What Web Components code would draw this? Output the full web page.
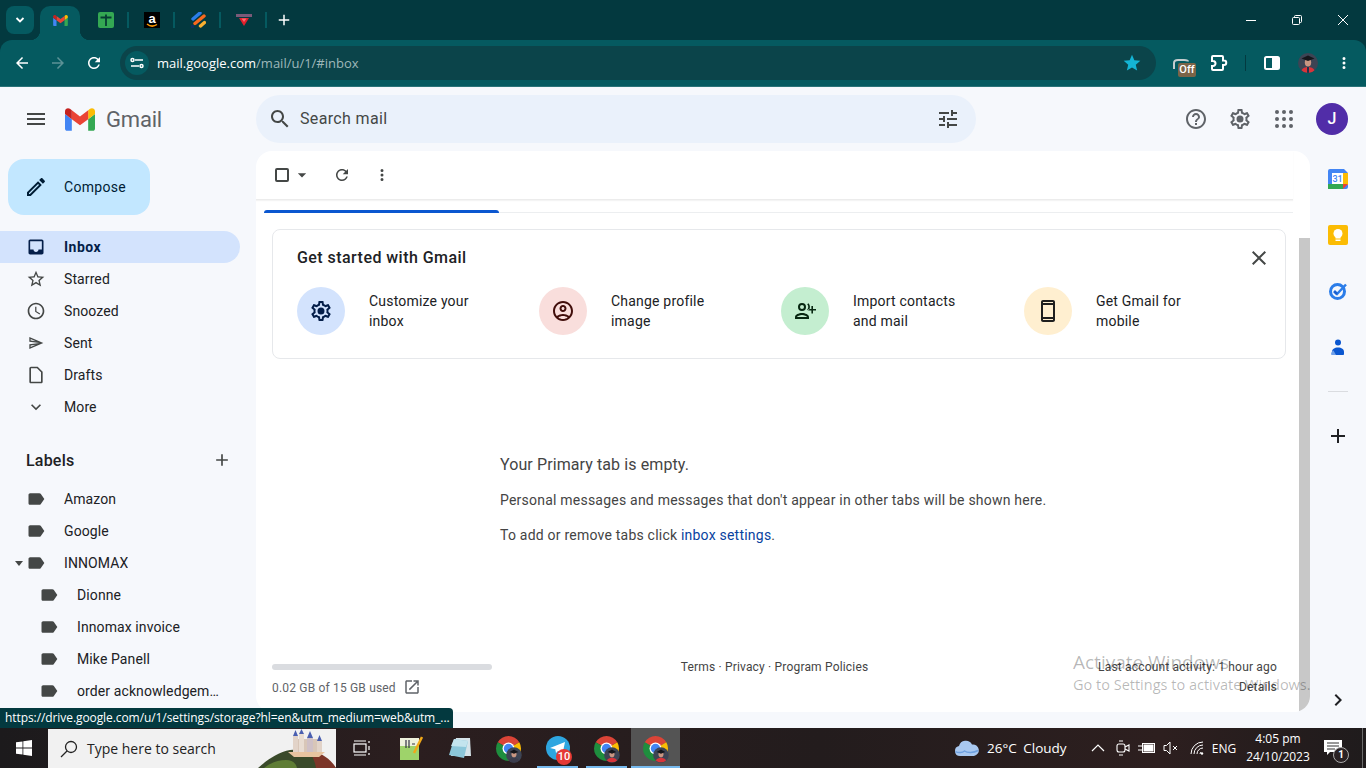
<!DOCTYPE html>
<html lang="en">
<head>
<meta charset="utf-8">
<title>Inbox - Gmail</title>
<style>
  html, body { margin: 0; height: 768px; overflow: hidden; }
  body {
    position: relative;
    display: flex;
    flex-direction: column;
    font-family: Roboto, "Liberation Sans", sans-serif;
    background: #f6f8fc;
  }
</style>
</head>
<body>
<chrome-tabs></chrome-tabs>
<chrome-toolbar></chrome-toolbar>
<gmail-app></gmail-app>
<win-taskbar></win-taskbar>
<status-bubble>https://drive.google.com/u/1/settings/storage?hl=en&amp;utm_medium=web&amp;utm_...</status-bubble>
<activate-mark></activate-mark>

<script>
const PATHS = {
  menu: 'M3 18h18v-2H3v2zm0-5h18v-2H3v2zm0-7v2h18V6H3z',
  search: 'M15.5 14h-.79l-.28-.27C15.41 12.59 16 11.11 16 9.5 16 5.91 13.09 3 9.5 3S3 5.91 3 9.5 5.91 16 9.5 16c1.61 0 3.09-.59 4.23-1.57l.27.28v.79l5 4.99L20.49 19l-4.99-5zm-6 0C7.01 14 5 11.99 5 9.5S7.01 5 9.5 5 14 7.01 14 9.5 11.99 14 9.5 14z',
  tune: 'M3 17v2h6v-2H3zM3 5v2h10V5H3zm10 16v-2h8v-2h-8v-2h-2v6h2zM7 9v2H3v2h4v2h2V9H7zm14 4v-2H11v2h10zm-6-4h2V7h4V5h-4V3h-2v6z',
  help: 'M11 18h2v-2h-2v2zm1-16C6.48 2 2 6.48 2 12s4.48 10 10 10 10-4.48 10-10S17.52 2 12 2zm0 18c-4.41 0-8-3.59-8-8s3.59-8 8-8 8 3.59 8 8-3.59 8-8 8zm0-14c-2.21 0-4 1.79-4 4h2c0-1.1.9-2 2-2s2 .9 2 2c0 2-3 1.75-3 5h2c0-2.25 3-2.5 3-5 0-2.21-1.79-4-4-4z',
  gear: 'M19.43 12.98c.04-.32.07-.64.07-.98 0-.34-.03-.66-.07-.98l2.11-1.65c.19-.15.24-.42.12-.64l-2-3.46c-.09-.16-.26-.25-.44-.25-.06 0-.12.01-.17.03l-2.49 1c-.52-.4-1.08-.73-1.69-.98l-.38-2.65C14.46 2.18 14.25 2 14 2h-4c-.25 0-.46.18-.49.42l-.38 2.65c-.61.25-1.17.59-1.69.98l-2.49-1c-.06-.02-.12-.03-.18-.03-.17 0-.34.09-.43.25l-2 3.46c-.13.22-.07.49.12.64l2.11 1.65c-.04.32-.07.65-.07.98 0 .33.03.66.07.98l-2.11 1.65c-.19.15-.24.42-.12.64l2 3.46c.09.16.26.25.44.25.06 0 .12-.01.17-.03l2.49-1c.52.4 1.08.73 1.69.98l.38 2.65c.03.24.24.42.49.42h4c.25 0 .46-.18.49-.42l.38-2.65c.61-.25 1.17-.59 1.69-.98l2.49 1c.06.02.12.03.18.03.17 0 .34-.09.43-.25l2-3.46c.12-.22.07-.49-.12-.64l-2.11-1.65zm-1.98-1.71c.04.31.05.52.05.73 0 .21-.02.43-.05.73l-.14 1.13.89.7 1.08.84-.7 1.21-1.27-.51-1.04-.42-.9.68c-.43.32-.84.56-1.25.73l-1.06.43-.16 1.13-.2 1.35h-1.4l-.19-1.35-.16-1.13-1.06-.43c-.43-.18-.83-.41-1.23-.71l-.91-.7-1.06.43-1.27.51-.7-1.21 1.08-.84.89-.7-.14-1.13c-.03-.31-.05-.54-.05-.74s.02-.43.05-.73l.14-1.13-.89-.7-1.08-.84.7-1.21 1.27.51 1.04.42.9-.68c.43-.32.84-.56 1.25-.73l1.06-.43.16-1.13.2-1.35h1.39l.19 1.35.16 1.13 1.06.43c.43.18.83.41 1.23.71l.91.7 1.06-.43 1.27-.51.7 1.21-1.07.85-.89.7.14 1.13zM12 8.5a3.5 3.5 0 1 0 0 7 3.5 3.5 0 0 0 0-7z',
  edit: 'M14.06 9.02l.92.92L5.92 19H5v-.92l9.06-9.06M17.66 3c-.25 0-.51.1-.7.29l-1.83 1.83 3.75 3.75 1.83-1.83c.39-.39.39-1.02 0-1.41l-2.34-2.34c-.2-.2-.45-.29-.71-.29zm-3.6 3.19L3 17.25V21h3.75L17.81 9.94l-3.75-3.75z',
  inbox: 'M19 3H4.99c-1.11 0-1.98.89-1.98 2L3 19c0 1.1.88 2 1.99 2H19c1.1 0 2-.9 2-2V5c0-1.11-.9-2-2-2zm0 12h-4c0 1.66-1.35 3-3 3s-3-1.34-3-3H4.99V5H19v10z',
  star: 'M22 9.24l-7.19-.62L12 2 9.19 8.63 2 9.24l5.46 4.73L5.82 21 12 17.27 18.18 21l-1.63-7.03L22 9.24zM12 15.4l-3.76 2.27 1-4.28-3.32-2.88 4.38-.38L12 6.1l1.71 4.04 4.38.38-3.32 2.88 1 4.28L12 15.4z',
  starfill: 'M12 17.27L18.18 21l-1.64-7.03L22 9.24l-7.19-.61L12 2 9.19 8.63 2 9.24l5.46 4.73L5.82 21z',
  clock: 'M11.99 2C6.47 2 2 6.48 2 12s4.47 10 9.99 10C17.52 22 22 17.52 22 12S17.52 2 11.99 2zM12 20c-4.42 0-8-3.58-8-8s3.58-8 8-8 8 3.58 8 8-3.58 8-8 8zm.5-13H11v6l5.25 3.15.75-1.23-4.5-2.67z',
  send: 'M4.01 6.03l7.51 3.22-7.52-1 .01-2.22m7.5 8.72L4 17.97v-2.22l7.51-1M2.01 3L2 10l15 2-15 2 .01 7L23 12 2.01 3z',
  draft: 'M6 2c-1.1 0-2 .9-2 2v16c0 1.1.9 2 2 2h12c1.1 0 2-.9 2-2V8l-6-6H6zm0 18V4h7.17L18 8.83V20H6z',
  more: 'M16.59 8.59L12 13.17 7.41 8.59 6 10l6 6 6-6z',
  label: 'M17.63 5.84C17.27 5.33 16.67 5 16 5L5 5.01C3.9 5.01 3 5.9 3 7v10c0 1.1.9 1.99 2 1.99L16 19c.67 0 1.27-.33 1.63-.84L22 12l-4.37-6.16z',
  add: 'M19 13h-6v6h-2v-6H5v-2h6V5h2v6h6v2z',
  drop: 'M7 10l5 5 5-5z',
  refresh: 'M17.65 6.35C16.2 4.9 14.21 4 12 4c-4.42 0-7.99 3.58-7.99 8s3.57 8 7.99 8c3.73 0 6.84-2.55 7.73-6h-2.08c-.82 2.33-3.04 4-5.65 4-3.31 0-6-2.69-6-6s2.69-6 6-6c1.66 0 3.14.69 4.22 1.78L13 11h7V4l-2.35 2.35z',
  dots: 'M12 8a2 2 0 1 0 0-4 2 2 0 0 0 0 4zm0 2a2 2 0 1 0 0 4 2 2 0 0 0 0-4zm0 6a2 2 0 1 0 0 4 2 2 0 0 0 0-4z',
  close: 'M19 6.41L17.59 5 12 10.59 6.41 5 5 6.41 10.59 12 5 17.59 6.41 19 12 13.41 17.59 19 19 17.59 13.41 12z',
  account: 'M12 2C6.48 2 2 6.48 2 12s4.48 10 10 10 10-4.48 10-10S17.52 2 12 2zM7.35 18.5C8.66 17.56 10.26 17 12 17s3.34.56 4.65 1.5C15.34 19.44 13.74 20 12 20s-3.34-.56-4.65-1.5zm10.79-1.38C16.45 15.8 14.32 15 12 15s-4.45.8-6.14 2.12C4.7 15.73 4 13.95 4 12c0-4.42 3.58-8 8-8s8 3.58 8 8c0 1.95-.7 3.73-1.86 5.12zM12 6c-1.93 0-3.5 1.57-3.5 3.5S10.07 13 12 13s3.5-1.57 3.5-3.5S13.93 6 12 6zm0 5c-.83 0-1.5-.67-1.5-1.5S11.17 8 12 8s1.5.67 1.5 1.5S12.83 11 12 11z',
  phone: 'M17 1.01L7 1c-1.1 0-2 .9-2 2v18c0 1.1.9 2 2 2h10c1.1 0 2-.9 2-2V3c0-1.1-.9-1.99-2-1.99zM17 21H7v-1h10v1zm0-3H7V6h10v12zM7 4V3h10v1H7z',
  contacts: 'M9 4a4 4 0 1 0 0 8 4 4 0 0 0 0-8zm0 6a2 2 0 1 1 0-4 2 2 0 0 1 0 4zm0 4c-3.3 0-7 1.6-7 4v2h14v-2c0-2.4-3.7-4-7-4zm-5 4c.3-.8 2.7-2 5-2s4.7 1.2 5 2H4zm11.5-13.7a6 6 0 0 1 0 7.4l-1.3-1a4.3 4.3 0 0 0 0-5.4l1.3-1zM20 10V7h-1.6v3h-3v1.6h3v3H20v-3h3V10h-3z',
  link: 'M19 19H5V5h7V3H5c-1.11 0-2 .9-2 2v14c0 1.1.89 2 2 2h14c1.1 0 2-.9 2-2v-7h-2v7zM14 3v2h3.59l-9.83 9.83 1.41 1.41L19 6.41V10h2V3h-7z',
  right: 'M10 6L8.59 7.41 13.17 12l-4.58 4.59L10 18l6-6z',
  back: 'M20 11H7.83l5.59-5.59L12 4l-8 8 8 8 1.41-1.41L7.83 13H20v-2z',
  forward: 'M4 13h12.17l-5.59 5.59L12 20l8-8-8-8-1.41 1.41L16.17 11H4v2z'
};

// tiny base so every element only has to say what css + markup it wants
class Comp extends HTMLElement {
  connectedCallback() {
    if (this.shadowRoot) return;
    this.attachShadow({ mode: 'open' }).innerHTML = `<style>${this.css()}</style>${this.html()}`;
  }
  css() { return ':host{display:block}'; }
  html() { return '<slot></slot>'; }
}

class GIcon extends Comp {
  css() {
    const s = this.getAttribute('size') || 20;
    return `:host{display:inline-flex;flex:none;width:${s}px;height:${s}px}svg{display:block;width:100%;height:100%;fill:currentColor}`;
  }
  html() { return `<svg viewBox="0 0 24 24"><path d="${PATHS[this.getAttribute('name')]}"/></svg>`; }
}
customElements.define('g-icon', GIcon);

const gmailM = (w, h) => `<svg width="${w}" height="${h}" viewBox="52 42 88 66">
  <path fill="#4285f4" d="M58 108h14V74L52 59v43c0 3.32 2.69 6 6 6"/>
  <path fill="#34a853" d="M120 108h14c3.32 0 6-2.69 6-6V59l-20 15"/>
  <path fill="#fbbc04" d="M120 48v26l20-15v-8c0-7.42-8.47-11.65-14.4-7.2"/>
  <path fill="#ea4335" d="M72 74V48l24 18 24-18v26L96 92"/>
  <path fill="#c5221f" d="M52 51v8l20 15V48l-5.6-4.2c-5.94-4.45-14.4-.22-14.4 7.2"/></svg>`;

const gradFace = (s) => `<svg width="${s}" height="${s}" viewBox="0 0 20 20">
  <defs><clipPath id="c"><circle cx="10" cy="10" r="10"/></clipPath></defs>
  <g clip-path="url(#c)"><rect width="20" height="20" fill="#3d4454"/>
  <path d="M3 20c0-4 3-6 7-6s7 2 7 6z" fill="#d8343a"/><path d="M9 14h2v6H9z" fill="#26304a"/>
  <ellipse cx="10" cy="9.5" rx="3.2" ry="4" fill="#c99682"/>
  <path d="M3.500 5.5L10 2.500l6.500 3L10 8z" fill="#15161b"/></g></svg>`;

class ChromeTabs extends Comp {
  css() {
    return `
    :host { display:flex; flex:none; height:40px; background:#03393f; color:#fff; align-items:stretch; }
    .list { width:28px; height:28px; margin:6px 6px 0 6px; border-radius:8px; background:#055a60; display:flex; align-items:center; justify-content:center; }
    .active { position:relative; width:40px; margin-top:6px; margin-right:3px; background:#055a60; border-radius:10px 10px 0 0; display:flex; align-items:center; justify-content:center; padding-bottom:6px; box-sizing:border-box; }
    .active::before, .active::after { content:""; position:absolute; bottom:0; width:10px; height:10px; }
    .active::before { left:-10px; background:radial-gradient(circle at 0 0, transparent 10px, #055a60 10.5px); }
    .active::after { right:-10px; background:radial-gradient(circle at 100% 0, transparent 10px, #055a60 10.5px); }
    .tab { position:relative; width:46px; display:flex; align-items:center; justify-content:center; }
    .tab::after { content:""; position:absolute; right:0; top:12px; height:16px; width:2px; background:#055a60; }
    .plus { width:34px; display:flex; align-items:center; justify-content:center; }
    .win { margin-left:auto; display:flex; }
    .win div { width:46px; display:flex; align-items:center; justify-content:center; }
    .az { width:16px; height:16px; background:#000; position:relative; text-align:center; font:700 13px/13px "Liberation Sans", sans-serif; color:#fff; }
    `;
  }
  html() {
    return `
    <div class="list"><svg width="10" height="8" viewBox="0 0 10 8"><path d="M1.500 2L5 5.500 8.500 2" fill="none" stroke="#fff" stroke-width="1.800"/></svg></div>
    <div class="active">${gmailM(15, 11)}</div>
    <div class="tab"><svg width="16" height="16" viewBox="0 0 16 16"><rect width="16" height="16" rx="2" fill="#34a853"/><path d="M2.500 5.500h11M8 2.500V14" stroke="#063c33" stroke-width="1.800" fill="none"/></svg></div>
    <div class="tab"><div class="az">a<svg style="position:absolute;left:2px;top:11px" width="12" height="5" viewBox="0 0 12 5"><path d="M1 1c3 2.500 7 2.500 10 .5" stroke="#ff9900" stroke-width="1.500" fill="none"/></svg></div></div>
    <div class="tab"><svg width="16" height="16" viewBox="0 0 16 16"><path d="M3 7l7-6" stroke="#2b7de9" stroke-width="3.400" stroke-linecap="round"/><path d="M5 11.5l9-7.5" stroke="#f8681d" stroke-width="3.400" stroke-linecap="round"/><path d="M10.500 14l4-3.500" stroke="#fbb030" stroke-width="3.400" stroke-linecap="round"/><path d="M1 13l3 0 0 3-3 0z" fill="#0b2f63"/></svg></div>
    <div class="tab"><svg width="16" height="14" viewBox="0 0 16 14"><rect y="1" width="16" height="3" fill="#7a5a78"/><path d="M3 5h10l-5 8z" fill="#e2202c"/><path d="M5.500 5.5h5L8 9z" fill="#ff6b70"/></svg></div>
    <div class="plus"><g-icon name="add" size="18"></g-icon></div>
    <div class="win">
      <div><svg width="10" height="10" viewBox="0 0 10 10"><path d="M0 5.500h10" stroke="#fff"/></svg></div>
      <div><svg width="10" height="10" viewBox="0 0 10 10" fill="none" stroke="#fff"><rect x=".5" y="2.500" width="7" height="7" rx="1"/><path d="M2.500 2.500V1.500a1 1 0 0 1 1-1h5a1 1 0 0 1 1 1v5a1 1 0 0 1-1 1h-1"/></svg></div>
      <div><svg width="10" height="10" viewBox="0 0 10 10"><path d="M0 0l10 10M10 0L0 10" stroke="#fff"/></svg></div>
    </div>`;
  }
}
customElements.define('chrome-tabs', ChromeTabs);

class ChromeToolbar extends Comp {
  css() {
    return `
    :host { display:block; flex:none; background:#03393f; color:#fff; }
    .bar { display:flex; align-items:center; box-sizing:border-box; height:47px; padding-left:4px; padding-bottom:1px; background:#055a60; border-bottom:1px solid #2a7378; border-radius:12px 12px 0 0; }
    .btn { position:relative; flex:none; width:36px; height:36px; display:flex; align-items:center; justify-content:center; }
    .dim { color:#5c9296; }
    .omni { flex:none; display:flex; align-items:center; box-sizing:border-box; width:1036px; height:34px; margin:0 6px 0 8px; padding:0 14px 0 5px; border-radius:17px; background:#0b444a; font:13px/34px "Open Sans", Roboto, sans-serif; }
    .site { width:24px; height:24px; border-radius:50%; background:#055a60; margin-right:8px; display:flex; align-items:center; justify-content:center; }
    .host { color:#fff; }
    .path { color:#9fb8ba; }
    .star { margin-left:auto; }
    .off { position:absolute; left:16px; top:18px; width:18px; height:14px; border-radius:2px; background:#7b6448; font:500 11px/14px Roboto, sans-serif; text-align:center; color:#fff; }
    .sep { flex:none; width:1px; height:16px; margin:0 8px; background:#033a40; }
    `;
  }
  html() {
    return `<div class="bar">
      <div class="btn"><g-icon name="back" size="18"></g-icon></div>
      <div class="btn dim"><g-icon name="forward" size="18"></g-icon></div>
      <div class="btn"><g-icon name="refresh" size="18"></g-icon></div>
      <div class="omni">
        <div class="site"><svg width="14" height="14" viewBox="0 0 14 14" fill="none" stroke="#fff" stroke-width="1.500"><path d="M5 4h8M1 10h8"/><circle cx="2.500" cy="4" r="1.500"/><circle cx="11.500" cy="10" r="1.500"/></svg></div>
        <span class="host">mail.google.com</span><span class="path">/mail/u/1/#inbox</span>
        <g-icon class="star" name="starfill" size="20" style="color:#14b4d4"></g-icon>
      </div>
      <div class="btn"><svg style="margin:2px 0 0 2px" width="16" height="12" viewBox="0 0 16 12" fill="none" stroke="#c4cdce" stroke-width="2"><path d="M1 11V5c0-2 2-3 4-3h6c2 0 4 .5 4 1.500"/></svg><span class="off">Off</span></div>
      <div class="btn" style="margin-left:3px"><svg width="20" height="20" viewBox="0 0 20 20" fill="none" stroke="#fff" stroke-width="2"><path d="M4 3h9a1 1 0 0 1 1 1v3.500h1a2.250 2.250 0 0 1 0 4.500h-1v4a1 1 0 0 1-1 1H4a1 1 0 0 1-1-1v-3h1a2.500 2.500 0 0 0 0-5H3V4a1 1 0 0 1 1-1z"/></svg></div>
      <div class="sep"></div>
      <div class="btn"><svg width="16" height="14" viewBox="0 0 16 14"><rect x="1" y="1" width="14" height="12" rx="1.500" fill="none" stroke="#fff" stroke-width="2"/><rect x="8" y="1" width="7" height="12" fill="#fff"/></svg></div>
      <div class="btn">${gradFace(20)}</div>
      <div class="btn"><g-icon name="dots" size="18"></g-icon></div>
    </div>`;
  }
}
customElements.define('chrome-toolbar', ChromeToolbar);

class GmailHeader extends Comp {
  css() {
    return `
    :host { display:flex; align-items:center; height:64px; color:#444746; }
    .brand { flex:none; width:256px; display:flex; align-items:center; box-sizing:border-box; padding-left:24px; }
    .word { margin:2px 0 0 11px; font:22px/30px Roboto, sans-serif; color:#5f6368; letter-spacing:-.2px; }
    .logo { margin-left:17px; display:flex; }
    .search { flex:none; box-sizing:border-box; width:720px; height:48px; padding:0 16px 0 12px; border-radius:24px; background:#eaf1fb; display:flex; align-items:center; font:16px Roboto, sans-serif; letter-spacing:.35px; }
    .search span { margin:0 0 2px 8px; }
    .search g-icon:last-child { margin-left:auto; }
    .right { margin-left:auto; display:flex; align-items:center; padding-right:18px; }
    .act { width:44px; height:40px; display:flex; align-items:center; justify-content:center; }
    .grid { display:grid; grid-template-columns:repeat(3,4px); gap:3px; }
    .grid i { width:4px; height:4px; border-radius:50%; background:#5f6368; display:block; }
    .ava { width:32px; height:32px; margin-left:10px; border-radius:50%; background:#512da8; color:#fff; font:500 16px/32px Roboto, sans-serif; text-align:center; }
    `;
  }
  html() {
    return `
    <div class="brand"><g-icon name="menu" size="24"></g-icon><div class="logo">${gmailM(30, 23)}</div><div class="word">Gmail</div></div>
    <div class="search"><g-icon name="search" size="24"></g-icon><span>Search mail</span><g-icon name="tune" size="24"></g-icon></div>
    <div class="right">
      <div class="act"><g-icon name="help" size="24" style="color:#5f6368"></g-icon></div>
      <div class="act"><g-icon name="gear" size="24" style="color:#5f6368"></g-icon></div>
      <div class="act"><div class="grid">${'<i></i>'.repeat(9)}</div></div>
      <div class="ava">J</div>
    </div>`;
  }
}
customElements.define('gmail-header', GmailHeader);

class NavItem extends Comp {
  css() {
    const on = this.hasAttribute('active');
    return `
    :host { display:flex; align-items:center; width:240px; height:32px; box-sizing:border-box; padding-left:26px; gap:18px; border-radius:0 16px 16px 0;
      background:${on ? '#d3e3fd' : 'transparent'}; color:${on ? '#041e49' : '#202124'}; font:${on ? 700 : 400} 14px Roboto, sans-serif; letter-spacing:${on ? '.5px' : '.1px'}; }
    g-icon { color:${on ? '#041e49' : '#444746'}; transform:scale(${this.getAttribute('shrink') || 1}); }`;
  }
  html() { return `<g-icon name="${this.getAttribute('icon')}" size="20"></g-icon><slot></slot>`; }
}
customElements.define('nav-item', NavItem);

class LabelItem extends Comp {
  css() {
    const d = +this.getAttribute('depth') || 0;
    return `
    :host { display:flex; align-items:center; height:32px; box-sizing:border-box; padding-left:${12 + d * 13}px; color:#202124; font:14px Roboto, sans-serif; letter-spacing:.1px; }
    .car { flex:none; width:14px; display:flex; justify-content:center; }
    g-icon { color:#444746; margin-right:18px; }
    .txt { max-width:146px; white-space:nowrap; overflow:hidden; text-overflow:ellipsis; }`;
  }
  html() {
    const caret = this.hasAttribute('open') ? '<svg width="10" height="5" viewBox="0 0 10 5"><path d="M1 0h8L5 5z" fill="#444746"/></svg>' : '';
    return `<div class="car">${caret}</div><g-icon name="label" size="20"></g-icon><div class="txt"><slot></slot></div>`;
  }
}
customElements.define('label-item', LabelItem);

class GmailSidebar extends Comp {
  css() {
    return `
    :host { display:block; flex:none; width:256px; overflow:hidden; padding-top:8px; box-sizing:border-box; }
    .compose { display:flex; align-items:center; box-sizing:border-box; width:142px; height:56px; margin-left:8px; padding-left:16px; gap:16px; border-radius:16px; background:#c2e7ff; color:#001d35; font:400 14px Roboto, sans-serif; letter-spacing:.3px; }
    nav { margin-top:16px; }
    .head { display:flex; align-items:center; justify-content:space-between; height:32px; margin:21px 0 7px; padding:0 24px 0 26px; color:#202124; font:500 16px Roboto, sans-serif; letter-spacing:.2px; }
    .head g-icon { color:#444746; }
    `;
  }
  html() {
    return `
    <div class="compose"><g-icon name="edit" size="24"></g-icon>Compose</div>
    <nav>
      <nav-item icon="inbox" active>Inbox</nav-item>
      <nav-item icon="star">Starred</nav-item>
      <nav-item icon="clock">Snoozed</nav-item>
      <nav-item icon="send" shrink=".8">Sent</nav-item>
      <nav-item icon="draft">Drafts</nav-item>
      <nav-item icon="more">More</nav-item>
    </nav>
    <div class="head">Labels<g-icon name="add" size="20"></g-icon></div>
    <label-item>Amazon</label-item>
    <label-item>Google</label-item>
    <label-item open>INNOMAX</label-item>
    <label-item depth="1">Dionne</label-item>
    <label-item depth="1">Innomax invoice</label-item>
    <label-item depth="1">Mike Panell</label-item>
    <label-item depth="1">order acknowledgements</label-item>`;
  }
}
customElements.define('gmail-sidebar', GmailSidebar);

class StartTile extends Comp {
  css() {
    return `
    :host { display:flex; align-items:center; gap:24px; color:#202124; font:14px/20px Roboto, sans-serif; letter-spacing:.2px; }
    .dot { flex:none; width:48px; height:48px; border-radius:50%; display:flex; align-items:center; justify-content:center; background:${this.getAttribute('bg')}; color:${this.getAttribute('fg')}; }
    .txt { width:120px; }`;
  }
  html() { return `<div class="dot"><g-icon name="${this.getAttribute('icon')}" size="24"></g-icon></div><div class="txt"><slot></slot></div>`; }
}
customElements.define('start-tile', StartTile);

class PromoCard extends Comp {
  css() {
    return `
    :host { display:block; box-sizing:border-box; height:130px; margin:16px 13px 0 16px; padding:16px 14px 0 24px; border:1px solid #e6e8eb; border-radius:8px; }
    .top { display:flex; align-items:center; justify-content:space-between; height:24px; color:#202124; font:500 16px/24px Roboto, sans-serif; letter-spacing:.45px; }
    .top g-icon { color:#444746; margin-top:-1px; }
    .row { display:grid; grid-template-columns:242px 242px 243px 200px; margin-top:17px; }`;
  }
  html() {
    return `
    <div class="top">Get started with Gmail<g-icon name="close" size="24"></g-icon></div>
    <div class="row">
      <start-tile icon="gear" bg="#d3e3fd" fg="#041e49">Customize your inbox</start-tile>
      <start-tile icon="account" bg="#f9dedc" fg="#410e0b">Change profile image</start-tile>
      <start-tile icon="contacts" bg="#c4eed0" fg="#072711">Import contacts and mail</start-tile>
      <start-tile icon="phone" bg="#ffefd0" fg="#1f1f1f">Get Gmail for mobile</start-tile>
    </div>`;
  }
}
customElements.define('promo-card', PromoCard);

class MailFooter extends Comp {
  css() {
    return `
    :host { display:grid; grid-template-columns:1fr auto 1fr; margin-top:auto; padding:0 22px 16px 16px; color:#5f6368; font:12px/16px Roboto, sans-serif; letter-spacing:.18px; }
    .bar { width:220px; height:6px; margin:5px 0 10px; border-radius:3px; background:#dadce0; }
    .used { display:flex; align-items:center; gap:7px; }
    .used g-icon { color:#5f6368; margin-top:-3px; }
    .mid { color:#444; }
    .end { text-align:right; color:#444; }
    .end div + div { margin-top:4px; }`;
  }
  html() {
    return `
    <div><div class="bar"></div><div class="used">0.02 GB of 15 GB used <g-icon name="link" size="18"></g-icon></div></div>
    <div class="mid">Terms · Privacy · Program Policies</div>
    <div class="end"><div>Last account activity: 1 hour ago</div><div>Details</div></div>`;
  }
}
customElements.define('mail-footer', MailFooter);

class MailPane extends Comp {
  css() {
    return `
    :host { display:flex; flex:none; width:1054px; height:561px; margin-bottom:16px; background:#fff; border-radius:16px; overflow:hidden; }
    .body { flex:1; display:flex; flex-direction:column; min-width:0; }
    .tools { display:flex; align-items:center; flex:none; height:48px; margin-right:6px; padding-left:19px; border-bottom:1px solid #ececec; box-shadow:0 1px 1px #f4f4f4; color:#444746; }
    .check { width:10px; height:10px; border:2px solid #444746; border-radius:2px; }
    .tools g-icon.d { margin-left:3px; }
    .tabs { flex:none; height:12px; margin:0 6px 0 8px; border-bottom:1px solid #eceef0; position:relative; }
    .blue { position:absolute; left:0; bottom:-1px; width:235px; height:3px; background:#0b57d0; border-radius:3px 3px 0 0; }
    .empty { margin:96px 0 0 244px; color:#444; font:14px/20px Roboto, sans-serif; letter-spacing:.22px; }
    .empty h2 { margin:0 0 15px; font:400 16px/20px Roboto, sans-serif; color:#444; letter-spacing:.1px; }
    .empty p { margin:0 0 15px; }
    a { color:#0842a0; text-decoration:none; }
    .thumbway { flex:none; width:11px; padding-top:87px; box-sizing:border-box; }
    .thumb { height:100%; background:#c8c8c8; }`;
  }
  html() {
    return `
    <div class="body">
      <div class="tools">
        <div class="check"></div>
        <g-icon class="d" name="drop" size="20"></g-icon>
        <g-icon name="refresh" size="18" style="margin-left:21px"></g-icon>
        <g-icon name="dots" size="18" style="margin-left:22px"></g-icon>
      </div>
      <div class="tabs"><div class="blue"></div></div>
      <promo-card></promo-card>
      <div class="empty">
        <h2>Your Primary tab is empty.</h2>
        <p>Personal messages and messages that don't appear in other tabs will be shown here.</p>
        <p>To add or remove tabs click <a>inbox settings</a>.</p>
      </div>
      <mail-footer></mail-footer>
    </div>
    <div class="thumbway"><div class="thumb"></div></div>`;
  }
}
customElements.define('mail-pane', MailPane);

class AddonRail extends Comp {
  css() {
    return `
    :host { display:flex; flex-direction:column; align-items:center; flex:none; width:56px; padding-bottom:16px; box-sizing:border-box; color:#202124; }
    .it { height:56px; display:flex; align-items:center; justify-content:center; }
    hr { width:20px; height:1px; margin:16px 0 0; border:0; background:#dadce0; }`;
  }
  html() {
    return `
    <div class="it"><svg width="20" height="20" viewBox="0 0 20 20"><path d="M2 0h14l4 4v14a2 2 0 0 1-2 2H2a2 2 0 0 1-2-2V2a2 2 0 0 1 2-2z" fill="#4285f4"/><rect x="15" y="4" width="5" height="12" fill="#fbbc04"/><rect y="15" width="15" height="5" fill="#34a853"/><path d="M15 15h5l-5 5z" fill="#ea4335"/><rect x="4" y="4" width="11" height="11" fill="#fff"/><text x="9.500" y="13" text-anchor="middle" font-family="Roboto, sans-serif" font-size="9" font-weight="500" fill="#4285f4">31</text></svg></div>
    <div class="it"><svg width="20" height="20" viewBox="0 0 20 20"><rect width="20" height="20" rx="2" fill="#fbbc04"/><circle cx="10" cy="8.5" r="4.500" fill="#fff"/><rect x="7.500" y="11" width="5" height="2.500" fill="#fff"/><rect x="7.500" y="14.500" width="5" height="1.500" fill="#fff"/></svg></div>
    <div class="it"><svg width="20" height="20" viewBox="0 0 20 20" fill="none"><circle cx="9.500" cy="10.500" r="7" stroke="#2b7de9" stroke-width="3"/><path d="M6 10l3 3 9-9.500" stroke="#2b7de9" stroke-width="2.500"/><path d="M6.300 10.300l2.700 2.700" stroke="#1a5fd0" stroke-width="2.500"/></svg></div>
    <div class="it"><svg width="20" height="20" viewBox="0 0 20 20"><circle cx="10" cy="5.500" r="3" fill="#0b57d0"/><path d="M4 17v-2c0-3 2.500-4.500 6-4.500s6 1.500 6 4.500v2c0 .5-.4 1-1 1H5c-.6 0-1-.5-1-1z" fill="#0b57d0"/><path d="M3 17.500c0-2 1-3.500 2.500-4L8 18H4z" fill="#6f9fe8"/></svg></div>
    <hr>
    <g-icon name="add" size="24" style="margin-top:32px"></g-icon>
    <g-icon name="right" size="24" style="margin-top:auto"></g-icon>`;
  }
}
customElements.define('addon-rail', AddonRail);

class GmailApp extends Comp {
  css() {
    return `
    :host { display:flex; flex-direction:column; flex:1; min-height:0; background:#f6f8fc; }
    .row { display:flex; flex:1; min-height:0; }`;
  }
  html() {
    return `<gmail-header></gmail-header><div class="row"><gmail-sidebar></gmail-sidebar><mail-pane></mail-pane><addon-rail></addon-rail></div>`;
  }
}
customElements.define('gmail-app', GmailApp);

const chromeLogo = (badge) => `<svg width="25" height="25" viewBox="0 0 48 48" style="overflow:visible">
  <path fill="#db4437" d="M24 24L3.220 12A24 24 0 0 1 44.780 12Z"/>
  <path fill="#fbbc04" d="M24 24L44.780 12A24 24 0 0 1 24 48Z"/>
  <path fill="#1e8e3e" d="M24 24L24 48A24 24 0 0 1 3.220 12Z"/>
  <circle cx="24" cy="24" r="11.500" fill="#fff"/><circle cx="24" cy="24" r="9" fill="#4285f4"/>
  <g transform="translate(19.500 21.500) scale(1.500)"><circle cx="10" cy="10" r="10" fill="#3d4454"/><path d="M3.500 17c1-2.500 3.500-3.500 6.500-3.500s5.500 1 6.500 3.500a10 10 0 0 1-13 0z" fill="${badge}"/><ellipse cx="10" cy="9" rx="3.200" ry="4" fill="#c99682"/><path d="M4.500 6L10 3l5.500 3-5.500 2.500z" fill="#15161b"/></g>
  </svg>`;

class WinTaskbar extends Comp {
  css() {
    return `
    :host { display:flex; flex:none; height:40px; align-items:stretch; color:#fff; background:linear-gradient(90deg,#1c1a1c 0,#2b1e1f 30%,#231c1d 60%,#2d1f1f 85%,#1f1b1c 100%); font:14px "Open Sans", "Liberation Sans", sans-serif; }
    .start { flex:none; width:48px; display:flex; align-items:center; justify-content:center; }
    .find { position:relative; flex:none; width:288px; margin-top:1px; display:flex; align-items:center; box-sizing:border-box; padding-left:12px; background:#f1f1f1; color:#222; overflow:hidden; }
    .find span { margin-left:9px; }
    .find svg.castle { position:absolute; right:0; bottom:0; }
    .tv { flex:none; width:50px; display:flex; align-items:center; justify-content:center; }
    .app { position:relative; flex:none; width:49px; display:flex; align-items:center; justify-content:center; box-sizing:border-box; }
    .run::after { content:""; position:absolute; left:4px; right:4px; bottom:0; height:2px; background:#76b9ed; }
    .cur { background:#545454; }
    .cur::after { left:0; right:0; }
    .count { position:absolute; left:23px; top:21px; width:16px; height:16px; border-radius:50%; background:#e53935; font:500 11px/16px Roboto, sans-serif; text-align:center; }
    .tray { margin-left:auto; display:flex; align-items:center; }
    .wx { display:flex; align-items:center; width:131px; gap:7px; word-spacing:3px; font-size:13.5px; }
    .t { flex:none; display:flex; align-items:center; justify-content:center; height:40px; }
    .clock { width:76px; flex-direction:column; font-size:12px; line-height:18px; text-align:center; }
    .one { position:absolute; left:17px; top:19px; width:14px; height:14px; border:1.500px solid #aaa; border-radius:50%; background:#2a2224; font:700 10px/14px Roboto, sans-serif; text-align:center; }
    .desk { flex:none; width:4px; height:40px; border-left:1px solid #6a6a6a; box-sizing:border-box; margin-left:12px; }`;
  }
  html() {
    return `
    <div class="start"><svg width="16" height="16" viewBox="0 0 16 16" fill="#fff"><path d="M0 2.300l6.500-.9v6.200H0zM7.300 1.300L16 0v7.600H7.300zM0 8.400h6.500v6.200L0 13.700zM7.300 8.400H16V16l-8.700-1.300z"/></svg></div>
    <div class="find">
      <svg width="18" height="18" viewBox="0 0 18 18" fill="none" stroke="#222" stroke-width="1.300"><circle cx="11" cy="7" r="5.500"/><path d="M7 11l-6 6"/></svg>
      <span>Type here to search</span>
      <svg class="castle" width="78" height="39" viewBox="0 0 78 39">
        <path d="M0 39c9-8 20-16 32-18 16-2 34 4 46 18z" fill="#3a4a2a"/>
        <path d="M50 21c12 2 22 8 28 18H58c-1-7-4-13-8-18z" fill="#7c3528"/>
        <path d="M6 39c6-5 14-8 22-8 6 0 10 3 11 8z" fill="#5f7d35"/>
        <path d="M30 23h37l-6 5H36z" fill="#e8c4a0"/>
        <rect x="38" y="10" width="24" height="13" fill="#d8c6b8"/>
        <rect x="35" y="7" width="5" height="16" fill="#e2d3c8"/><rect x="41" y="5" width="5" height="18" fill="#e8dcd2"/><rect x="49" y="9" width="6" height="14" fill="#cfc0c6"/><rect x="59" y="12" width="5" height="11" fill="#e2d3c8"/>
        <path d="M35 7l2.500-6L40 7zM41 5l2.500-5L46 5zM49 9l3-7 3 7zM59 12l2.500-6 2.500 6z" fill="#4a5fb0"/>
      </svg>
    </div>
    <div class="tv"><svg width="17" height="16" viewBox="0 0 17 16" fill="none" stroke="#fff" stroke-width="1.200"><path d="M1 1h12M1 15h12"/><rect x="1" y="4" width="12" height="8"/><path d="M16 1v2M16 6v4M16 13v2"/></svg></div>
    <div class="app"><svg width="24" height="26" viewBox="0 0 24 26"><rect x="1" y="3" width="19" height="22" fill="#9ed36a"/><rect x="1" y="3" width="19" height="8" fill="#eef2dc"/><path d="M7 5v8M10 5v8M13 9h3" stroke="#334" stroke-width="1.200"/><path d="M15 18L23 2" stroke="#f0a818" stroke-width="2.500"/></svg></div>
    <div class="app"><svg width="24" height="24" viewBox="0 0 24 24"><path d="M8 2h14l1 18H3z" fill="#d6e4ea"/><path d="M6 3L1 19l15 3 4-17z" fill="#8cc7da"/><path d="M6 3l14 2-2 6L3 10z" fill="#c3e4ee"/></svg></div>
    <div class="app">${chromeLogo('#3c3c4c')}</div>
    <div class="app run"><svg width="24" height="24" viewBox="0 0 24 24"><circle cx="12" cy="12" r="12" fill="#2ea6e0"/><path d="M4 12l15-6-2.500 12-4.500-3-2 2-.7-3.700z" fill="#fff"/></svg><span class="count">10</span></div>
    <div class="app run">${chromeLogo('#d8343a')}</div>
    <div class="app run cur">${chromeLogo('#d8343a')}</div>
    <div class="tray">
      <div class="wx"><svg width="26" height="18" viewBox="0 0 26 18"><path d="M6 17a5 5 0 0 1-1-9.900A7 7 0 0 1 18 5.500 5.800 5.800 0 0 1 20 17z" fill="#a9c8f0"/><path d="M1.500 12.500c3 2 7 1 9-.5 3 2 9 2 13.500-.5" stroke="#6ea0e0" stroke-width="1.500" fill="none"/></svg><span>26°C Cloudy</span></div>
      <div class="t" style="width:26px"><svg width="14" height="8" viewBox="0 0 14 8" fill="none" stroke="#fff" stroke-width="1.200"><path d="M1 7l6-6 6 6"/></svg></div>
      <div class="t" style="width:24px"><svg width="14" height="18" viewBox="0 0 14 18" fill="none" stroke="#fff" stroke-width="1.100"><rect x="1" y="5" width="8" height="8" rx="2"/><path d="M9 8l4-2v6l-4-2M3 2h4M3 16h4"/></svg></div>
      <div class="t" style="width:24px"><svg width="18" height="12" viewBox="0 0 18 12"><rect x="4.500" y="1.500" width="12" height="9" fill="none" stroke="#fff"/><rect x="5.500" y="2.500" width="10" height="7" fill="#fff"/><path d="M0 4h5M0 8h5" stroke="#fff"/></svg></div>
      <div class="t" style="width:24px"><svg width="16" height="14" viewBox="0 0 16 14" fill="none" stroke="#fff"><path d="M1 4.500h2.500L7 1v12L3.500 9.500H1zM10 5l4 4M14 5l-4 4"/></svg></div>
      <div class="t" style="width:28px"><svg width="14" height="14" viewBox="0 0 14 14" fill="none" stroke="#fff"><path d="M1 13A12 12 0 0 1 13 1M4 13a9 9 0 0 1 9-9M7 13a6 6 0 0 1 6-6M10 13a3 3 0 0 1 1-2"/><circle cx="12" cy="12.500" r="1.200" fill="#fff" stroke="none"/></svg></div>
      <div class="t" style="width:26px;font-size:12px">ENG</div>
      <div class="t clock" style="margin-left:3px"><div>4:05 pm</div><div>24/10/2023</div></div>
      <div class="t" style="width:34px;position:relative"><svg width="18" height="16" viewBox="0 0 18 16"><path d="M0 0h18v12H6l-3 3v-3H0z" fill="#fff"/><path d="M3 3h12M3 6h12M3 9h8" stroke="#333"/></svg><span class="one">1</span></div>
      <div class="desk"></div>
    </div>`;
  }
}
customElements.define('win-taskbar', WinTaskbar);

class StatusBubble extends Comp {
  css() {
    return `:host { position:absolute; left:0; top:708px; width:453px; height:20px; box-sizing:border-box; padding:0 5px; background:#03393f; border-radius:0 4px 0 0; color:#fff; font:12px/20px "Open Sans", Roboto, sans-serif; letter-spacing:-.08px; white-space:nowrap; }`;
  }
}
customElements.define('status-bubble', StatusBubble);

class ActivateMark extends Comp {
  css() {
    return `
    :host { position:absolute; left:1073px; top:649px; color:rgba(0,0,0,.28); font-family:"Open Sans", "Liberation Sans", sans-serif; white-space:nowrap; pointer-events:none; }
    div { font-size:19px; line-height:26px; }
    p { margin:0; font-size:14.5px; line-height:20px; }`;
  }
  html() { return '<div>Activate Windows</div><p>Go to Settings to activate Windows.</p>'; }
}
customElements.define('activate-mark', ActivateMark);
</script>
</body>
</html>
